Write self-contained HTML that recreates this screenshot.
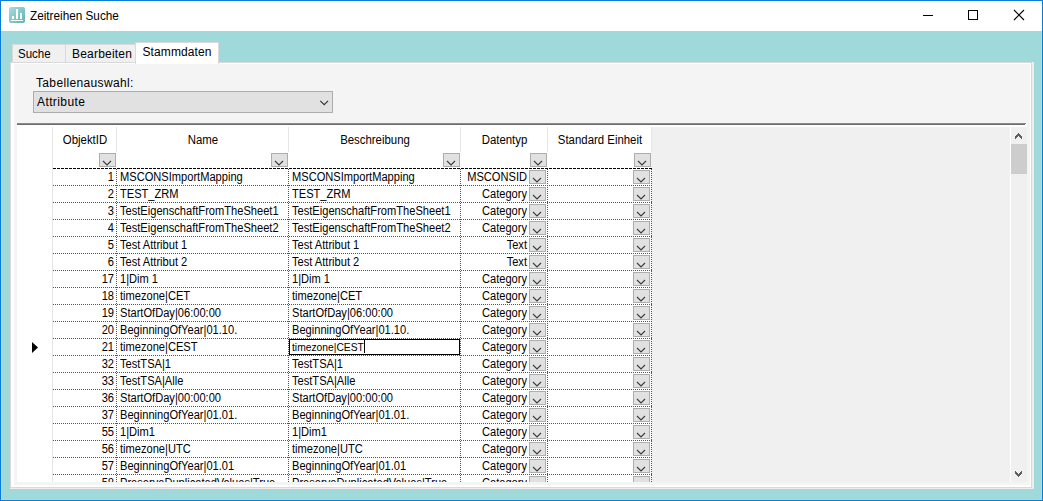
<!DOCTYPE html>
<html><head><meta charset="utf-8">
<style>
*{box-sizing:border-box;margin:0;padding:0}
html,body{width:1043px;height:501px;overflow:hidden;background:#9fd9d9;font-family:"Liberation Sans",sans-serif;color:#000}
.a{position:absolute}
.t{position:absolute;white-space:nowrap;line-height:16px;font-size:11px}
.ch{position:absolute;overflow:visible}
.btn{position:absolute;width:17px;height:14px;background:#e1e1e1;border:1px solid #adadad}
.hl{position:absolute;width:1px;background:#e5e5e5}
.dh{position:absolute;height:1px;background:repeating-linear-gradient(90deg,#555 0 1px,transparent 1px 2px)}
.dv{position:absolute;width:1px;background:repeating-linear-gradient(180deg,#555 0 1px,transparent 1px 2px)}
</style></head><body>

<div class="a" style="left:0;top:0;width:1043px;height:501px;border:1px solid #0a7dd8;border-right-color:#0a7dd8"></div>
<div class="a" style="left:1px;top:1px;width:1041px;height:30px;background:#fff"></div>
<div class="a" style="left:1px;top:31px;width:1041px;height:469px;border:1px solid #a6ded8;border-top:none"></div>
<svg class="a" style="left:9px;top:7px" width="16" height="16" viewBox="0 0 16 16">
<defs><linearGradient id="g" x1="0" y1="0" x2="1" y2="1"><stop offset="0" stop-color="#a9dcdc"/><stop offset="1" stop-color="#5fb4b4"/></linearGradient></defs>
<rect x="0" y="0" width="16" height="16" rx="2" fill="url(#g)"/>
<rect x="3" y="9" width="2" height="3" fill="#fff"/>
<rect x="7" y="2" width="2" height="10" fill="#fff"/>
<rect x="11" y="6" width="2" height="6" fill="#fff"/>
<rect x="2" y="13" width="12" height="1" fill="#fff"/>
</svg>
<div class="t" style="left:30px;top:9.62px;font-size:12.5px;line-height:12.5px;transform:scaleX(0.94);transform-origin:left 0;">Zeitreihen Suche</div>
<div class="a" style="left:923px;top:15px;width:10px;height:1px;background:#000"></div>
<div class="a" style="left:968px;top:10px;width:10px;height:10px;border:1px solid #000"></div>
<svg class="a" style="left:1013px;top:9px" width="12" height="12"><path d="M1 1 L11 11 M11 1 L1 11" stroke="#000" stroke-width="1.1"/></svg>
<div class="a" style="left:12px;top:44px;width:54px;height:19px;background:#f0f0f0;border:1px solid #d9d9d9;border-bottom:none"></div>
<div class="a" style="left:65px;top:44px;width:71px;height:19px;background:#f0f0f0;border:1px solid #d9d9d9;border-bottom:none"></div>
<div class="a" style="left:10px;top:62px;width:1024px;height:427px;background:#f1eded"></div>
<div class="a" style="left:10px;top:62px;width:1022px;height:426px;background:#fff;border:1px solid #d9d9d9;border-left-color:#ddd6d6"></div>
<div class="a" style="left:14px;top:64px;width:1016px;height:421px;background:#f4f4f4"></div>
<div class="a" style="left:135px;top:42px;width:84px;height:22px;background:#fff;border:1px solid #d9d9d9;border-bottom:none"></div>
<div class="t" style="left:17.5px;top:48.03px;font-size:12px;line-height:12px;transform:scaleX(0.96);transform-origin:left 0;">Suche</div>
<div class="t" style="left:72px;top:48.03px;font-size:12px;line-height:12px;letter-spacing:0.2px;">Bearbeiten</div>
<div class="t" style="left:142.5px;top:46.03px;font-size:12px;line-height:12px;letter-spacing:0.1px;">Stammdaten</div>
<div class="t" style="left:36px;top:77.03px;font-size:12px;line-height:12px;letter-spacing:0.35px;">Tabellenauswahl:</div>
<div class="a" style="left:33px;top:91px;width:300px;height:22px;background:#e1e1e1;border:1px solid #adadad"></div>
<div class="t" style="left:37px;top:96.03px;font-size:12px;line-height:12px;letter-spacing:0.4px;">Attribute</div>
<svg class="a" style="left:319px;top:99px" width="12" height="8"><path d="M1.3 1.8 L5.2 5.7 L9.1 1.8" fill="none" stroke="#333" stroke-width="1.15"/></svg>
<div class="a" style="left:17px;top:123px;width:1010px;height:359px;background:#f0f0f0;overflow:hidden">
<div class="a" style="left:0;top:0;width:1010px;height:4px;background:#fff"></div>
<div class="a" style="left:0;top:0;width:1009px;height:1px;background:#8a8a8a"></div>
<div class="a" style="left:0;top:1px;width:1008px;height:1px;background:#6d6d6d"></div>
<div class="a" style="left:0;top:2px;width:1009px;height:2px;background:#fff"></div>
<div class="a" style="left:0;top:4px;width:634px;height:355px;background:#fff"></div>
<div class="hl" style="left:35px;top:4px;height:25px"></div>
<div class="hl" style="left:99px;top:4px;height:25px"></div>
<div class="hl" style="left:271px;top:4px;height:25px"></div>
<div class="hl" style="left:443px;top:4px;height:25px"></div>
<div class="hl" style="left:530px;top:4px;height:25px"></div>
<div class="hl" style="left:634px;top:4px;height:25px"></div>
<div class="hl" style="left:35px;top:4px;height:355px"></div>
<div class="t" style="left:36px;top:11.03px;font-size:12px;line-height:12px;width:64px;text-align:center;transform:scaleX(0.95);transform-origin:center 0;">ObjektID</div>
<div class="btn" style="left:82px;top:30px"></div>
<svg class="ch" style="left:84px;top:35.5px" width="12" height="8"><path d="M2 2 L6.0 6 L10 2" fill="none" stroke="#3a3a3a" stroke-width="1.1"/></svg>
<div class="t" style="left:100px;top:11.03px;font-size:12px;line-height:12px;width:172px;text-align:center;transform:scaleX(0.95);transform-origin:center 0;">Name</div>
<div class="btn" style="left:254px;top:30px"></div>
<svg class="ch" style="left:256px;top:35.5px" width="12" height="8"><path d="M2 2 L6.0 6 L10 2" fill="none" stroke="#3a3a3a" stroke-width="1.1"/></svg>
<div class="t" style="left:272px;top:11.03px;font-size:12px;line-height:12px;width:172px;text-align:center;transform:scaleX(0.95);transform-origin:center 0;">Beschreibung</div>
<div class="btn" style="left:426px;top:30px"></div>
<svg class="ch" style="left:428px;top:35.5px" width="12" height="8"><path d="M2 2 L6.0 6 L10 2" fill="none" stroke="#3a3a3a" stroke-width="1.1"/></svg>
<div class="t" style="left:444px;top:11.03px;font-size:12px;line-height:12px;width:87px;text-align:center;transform:scaleX(0.95);transform-origin:center 0;">Datentyp</div>
<div class="btn" style="left:513px;top:30px"></div>
<svg class="ch" style="left:515px;top:35.5px" width="12" height="8"><path d="M2 2 L6.0 6 L10 2" fill="none" stroke="#3a3a3a" stroke-width="1.1"/></svg>
<div class="t" style="left:531px;top:11.03px;font-size:12px;line-height:12px;width:104px;text-align:center;transform:scaleX(0.95);transform-origin:center 0;">Standard Einheit</div>
<div class="btn" style="left:617px;top:30px"></div>
<svg class="ch" style="left:619px;top:35.5px" width="12" height="8"><path d="M2 2 L6.0 6 L10 2" fill="none" stroke="#3a3a3a" stroke-width="1.1"/></svg>
<div class="a" style="left:36px;top:45px;width:599px;height:1px;background:repeating-linear-gradient(90deg,#000 0 3px,transparent 3px 4px)"></div>
<div class="dh" style="left:36px;top:62px;width:599px"></div>
<div class="t" style="left:35px;top:48.03px;font-size:12px;line-height:12px;width:62px;text-align:right;transform:scaleX(0.925);transform-origin:right 0;">1</div>
<div class="t" style="left:103px;top:48.03px;font-size:12px;line-height:12px;transform:scaleX(0.925);transform-origin:left 0;">MSCONSImportMapping</div>
<div class="t" style="left:275px;top:48.03px;font-size:12px;line-height:12px;transform:scaleX(0.925);transform-origin:left 0;">MSCONSImportMapping</div>
<div class="t" style="left:443px;top:48.03px;font-size:12px;line-height:12px;width:67px;text-align:right;transform:scaleX(0.925);transform-origin:right 0;">MSCONSID</div>
<div class="btn" style="left:512px;top:47px"></div>
<svg class="ch" style="left:514px;top:52.5px" width="12" height="8"><path d="M2 2 L6.0 6 L10 2" fill="none" stroke="#3a3a3a" stroke-width="1.1"/></svg>
<div class="btn" style="left:616px;top:47px"></div>
<svg class="ch" style="left:618px;top:52.5px" width="12" height="8"><path d="M2 2 L6.0 6 L10 2" fill="none" stroke="#3a3a3a" stroke-width="1.1"/></svg>
<div class="dh" style="left:36px;top:79px;width:599px"></div>
<div class="t" style="left:35px;top:65.03px;font-size:12px;line-height:12px;width:62px;text-align:right;transform:scaleX(0.925);transform-origin:right 0;">2</div>
<div class="t" style="left:103px;top:65.03px;font-size:12px;line-height:12px;transform:scaleX(0.925);transform-origin:left 0;">TEST_ZRM</div>
<div class="t" style="left:275px;top:65.03px;font-size:12px;line-height:12px;transform:scaleX(0.925);transform-origin:left 0;">TEST_ZRM</div>
<div class="t" style="left:443px;top:65.03px;font-size:12px;line-height:12px;width:67px;text-align:right;transform:scaleX(0.925);transform-origin:right 0;">Category</div>
<div class="btn" style="left:512px;top:64px"></div>
<svg class="ch" style="left:514px;top:69.5px" width="12" height="8"><path d="M2 2 L6.0 6 L10 2" fill="none" stroke="#3a3a3a" stroke-width="1.1"/></svg>
<div class="btn" style="left:616px;top:64px"></div>
<svg class="ch" style="left:618px;top:69.5px" width="12" height="8"><path d="M2 2 L6.0 6 L10 2" fill="none" stroke="#3a3a3a" stroke-width="1.1"/></svg>
<div class="dh" style="left:36px;top:96px;width:599px"></div>
<div class="t" style="left:35px;top:82.03px;font-size:12px;line-height:12px;width:62px;text-align:right;transform:scaleX(0.925);transform-origin:right 0;">3</div>
<div class="t" style="left:103px;top:82.03px;font-size:12px;line-height:12px;transform:scaleX(0.925);transform-origin:left 0;">TestEigenschaftFromTheSheet1</div>
<div class="t" style="left:275px;top:82.03px;font-size:12px;line-height:12px;transform:scaleX(0.925);transform-origin:left 0;">TestEigenschaftFromTheSheet1</div>
<div class="t" style="left:443px;top:82.03px;font-size:12px;line-height:12px;width:67px;text-align:right;transform:scaleX(0.925);transform-origin:right 0;">Category</div>
<div class="btn" style="left:512px;top:81px"></div>
<svg class="ch" style="left:514px;top:86.5px" width="12" height="8"><path d="M2 2 L6.0 6 L10 2" fill="none" stroke="#3a3a3a" stroke-width="1.1"/></svg>
<div class="btn" style="left:616px;top:81px"></div>
<svg class="ch" style="left:618px;top:86.5px" width="12" height="8"><path d="M2 2 L6.0 6 L10 2" fill="none" stroke="#3a3a3a" stroke-width="1.1"/></svg>
<div class="dh" style="left:36px;top:113px;width:599px"></div>
<div class="t" style="left:35px;top:99.03px;font-size:12px;line-height:12px;width:62px;text-align:right;transform:scaleX(0.925);transform-origin:right 0;">4</div>
<div class="t" style="left:103px;top:99.03px;font-size:12px;line-height:12px;transform:scaleX(0.925);transform-origin:left 0;">TestEigenschaftFromTheSheet2</div>
<div class="t" style="left:275px;top:99.03px;font-size:12px;line-height:12px;transform:scaleX(0.925);transform-origin:left 0;">TestEigenschaftFromTheSheet2</div>
<div class="t" style="left:443px;top:99.03px;font-size:12px;line-height:12px;width:67px;text-align:right;transform:scaleX(0.925);transform-origin:right 0;">Category</div>
<div class="btn" style="left:512px;top:98px"></div>
<svg class="ch" style="left:514px;top:103.5px" width="12" height="8"><path d="M2 2 L6.0 6 L10 2" fill="none" stroke="#3a3a3a" stroke-width="1.1"/></svg>
<div class="btn" style="left:616px;top:98px"></div>
<svg class="ch" style="left:618px;top:103.5px" width="12" height="8"><path d="M2 2 L6.0 6 L10 2" fill="none" stroke="#3a3a3a" stroke-width="1.1"/></svg>
<div class="dh" style="left:36px;top:130px;width:599px"></div>
<div class="t" style="left:35px;top:116.03px;font-size:12px;line-height:12px;width:62px;text-align:right;transform:scaleX(0.925);transform-origin:right 0;">5</div>
<div class="t" style="left:103px;top:116.03px;font-size:12px;line-height:12px;transform:scaleX(0.925);transform-origin:left 0;">Test Attribut 1</div>
<div class="t" style="left:275px;top:116.03px;font-size:12px;line-height:12px;transform:scaleX(0.925);transform-origin:left 0;">Test Attribut 1</div>
<div class="t" style="left:443px;top:116.03px;font-size:12px;line-height:12px;width:67px;text-align:right;transform:scaleX(0.925);transform-origin:right 0;">Text</div>
<div class="btn" style="left:512px;top:115px"></div>
<svg class="ch" style="left:514px;top:120.5px" width="12" height="8"><path d="M2 2 L6.0 6 L10 2" fill="none" stroke="#3a3a3a" stroke-width="1.1"/></svg>
<div class="btn" style="left:616px;top:115px"></div>
<svg class="ch" style="left:618px;top:120.5px" width="12" height="8"><path d="M2 2 L6.0 6 L10 2" fill="none" stroke="#3a3a3a" stroke-width="1.1"/></svg>
<div class="dh" style="left:36px;top:147px;width:599px"></div>
<div class="t" style="left:35px;top:133.03px;font-size:12px;line-height:12px;width:62px;text-align:right;transform:scaleX(0.925);transform-origin:right 0;">6</div>
<div class="t" style="left:103px;top:133.03px;font-size:12px;line-height:12px;transform:scaleX(0.925);transform-origin:left 0;">Test Attribut 2</div>
<div class="t" style="left:275px;top:133.03px;font-size:12px;line-height:12px;transform:scaleX(0.925);transform-origin:left 0;">Test Attribut 2</div>
<div class="t" style="left:443px;top:133.03px;font-size:12px;line-height:12px;width:67px;text-align:right;transform:scaleX(0.925);transform-origin:right 0;">Text</div>
<div class="btn" style="left:512px;top:132px"></div>
<svg class="ch" style="left:514px;top:137.5px" width="12" height="8"><path d="M2 2 L6.0 6 L10 2" fill="none" stroke="#3a3a3a" stroke-width="1.1"/></svg>
<div class="btn" style="left:616px;top:132px"></div>
<svg class="ch" style="left:618px;top:137.5px" width="12" height="8"><path d="M2 2 L6.0 6 L10 2" fill="none" stroke="#3a3a3a" stroke-width="1.1"/></svg>
<div class="dh" style="left:36px;top:164px;width:599px"></div>
<div class="t" style="left:35px;top:150.03px;font-size:12px;line-height:12px;width:62px;text-align:right;transform:scaleX(0.925);transform-origin:right 0;">17</div>
<div class="t" style="left:103px;top:150.03px;font-size:12px;line-height:12px;transform:scaleX(0.925);transform-origin:left 0;">1|Dim 1</div>
<div class="t" style="left:275px;top:150.03px;font-size:12px;line-height:12px;transform:scaleX(0.925);transform-origin:left 0;">1|Dim 1</div>
<div class="t" style="left:443px;top:150.03px;font-size:12px;line-height:12px;width:67px;text-align:right;transform:scaleX(0.925);transform-origin:right 0;">Category</div>
<div class="btn" style="left:512px;top:149px"></div>
<svg class="ch" style="left:514px;top:154.5px" width="12" height="8"><path d="M2 2 L6.0 6 L10 2" fill="none" stroke="#3a3a3a" stroke-width="1.1"/></svg>
<div class="btn" style="left:616px;top:149px"></div>
<svg class="ch" style="left:618px;top:154.5px" width="12" height="8"><path d="M2 2 L6.0 6 L10 2" fill="none" stroke="#3a3a3a" stroke-width="1.1"/></svg>
<div class="dh" style="left:36px;top:181px;width:599px"></div>
<div class="t" style="left:35px;top:167.03px;font-size:12px;line-height:12px;width:62px;text-align:right;transform:scaleX(0.925);transform-origin:right 0;">18</div>
<div class="t" style="left:103px;top:167.03px;font-size:12px;line-height:12px;transform:scaleX(0.925);transform-origin:left 0;">timezone|CET</div>
<div class="t" style="left:275px;top:167.03px;font-size:12px;line-height:12px;transform:scaleX(0.925);transform-origin:left 0;">timezone|CET</div>
<div class="t" style="left:443px;top:167.03px;font-size:12px;line-height:12px;width:67px;text-align:right;transform:scaleX(0.925);transform-origin:right 0;">Category</div>
<div class="btn" style="left:512px;top:166px"></div>
<svg class="ch" style="left:514px;top:171.5px" width="12" height="8"><path d="M2 2 L6.0 6 L10 2" fill="none" stroke="#3a3a3a" stroke-width="1.1"/></svg>
<div class="btn" style="left:616px;top:166px"></div>
<svg class="ch" style="left:618px;top:171.5px" width="12" height="8"><path d="M2 2 L6.0 6 L10 2" fill="none" stroke="#3a3a3a" stroke-width="1.1"/></svg>
<div class="dh" style="left:36px;top:198px;width:599px"></div>
<div class="t" style="left:35px;top:184.03px;font-size:12px;line-height:12px;width:62px;text-align:right;transform:scaleX(0.925);transform-origin:right 0;">19</div>
<div class="t" style="left:103px;top:184.03px;font-size:12px;line-height:12px;transform:scaleX(0.925);transform-origin:left 0;">StartOfDay|06:00:00</div>
<div class="t" style="left:275px;top:184.03px;font-size:12px;line-height:12px;transform:scaleX(0.925);transform-origin:left 0;">StartOfDay|06:00:00</div>
<div class="t" style="left:443px;top:184.03px;font-size:12px;line-height:12px;width:67px;text-align:right;transform:scaleX(0.925);transform-origin:right 0;">Category</div>
<div class="btn" style="left:512px;top:183px"></div>
<svg class="ch" style="left:514px;top:188.5px" width="12" height="8"><path d="M2 2 L6.0 6 L10 2" fill="none" stroke="#3a3a3a" stroke-width="1.1"/></svg>
<div class="btn" style="left:616px;top:183px"></div>
<svg class="ch" style="left:618px;top:188.5px" width="12" height="8"><path d="M2 2 L6.0 6 L10 2" fill="none" stroke="#3a3a3a" stroke-width="1.1"/></svg>
<div class="dh" style="left:36px;top:215px;width:599px"></div>
<div class="t" style="left:35px;top:201.03px;font-size:12px;line-height:12px;width:62px;text-align:right;transform:scaleX(0.925);transform-origin:right 0;">20</div>
<div class="t" style="left:103px;top:201.03px;font-size:12px;line-height:12px;transform:scaleX(0.925);transform-origin:left 0;">BeginningOfYear|01.10.</div>
<div class="t" style="left:275px;top:201.03px;font-size:12px;line-height:12px;transform:scaleX(0.925);transform-origin:left 0;">BeginningOfYear|01.10.</div>
<div class="t" style="left:443px;top:201.03px;font-size:12px;line-height:12px;width:67px;text-align:right;transform:scaleX(0.925);transform-origin:right 0;">Category</div>
<div class="btn" style="left:512px;top:200px"></div>
<svg class="ch" style="left:514px;top:205.5px" width="12" height="8"><path d="M2 2 L6.0 6 L10 2" fill="none" stroke="#3a3a3a" stroke-width="1.1"/></svg>
<div class="btn" style="left:616px;top:200px"></div>
<svg class="ch" style="left:618px;top:205.5px" width="12" height="8"><path d="M2 2 L6.0 6 L10 2" fill="none" stroke="#3a3a3a" stroke-width="1.1"/></svg>
<div class="dh" style="left:36px;top:232px;width:599px"></div>
<div class="t" style="left:35px;top:218.03px;font-size:12px;line-height:12px;width:62px;text-align:right;transform:scaleX(0.925);transform-origin:right 0;">21</div>
<div class="t" style="left:103px;top:218.03px;font-size:12px;line-height:12px;transform:scaleX(0.925);transform-origin:left 0;">timezone|CEST</div>
<div class="a" style="left:272px;top:216px;width:171px;height:16px;background:#fff;border:1px solid #000"></div>
<div class="t" style="left:275px;top:218.62px;font-size:11.3px;line-height:11.3px;transform:scaleX(0.91);transform-origin:left 0;">timezone|CEST</div>
<div class="a" style="left:347px;top:217px;width:1px;height:13px;background:#000"></div>
<div class="t" style="left:443px;top:218.03px;font-size:12px;line-height:12px;width:67px;text-align:right;transform:scaleX(0.925);transform-origin:right 0;">Category</div>
<div class="btn" style="left:512px;top:217px"></div>
<svg class="ch" style="left:514px;top:222.5px" width="12" height="8"><path d="M2 2 L6.0 6 L10 2" fill="none" stroke="#3a3a3a" stroke-width="1.1"/></svg>
<div class="btn" style="left:616px;top:217px"></div>
<svg class="ch" style="left:618px;top:222.5px" width="12" height="8"><path d="M2 2 L6.0 6 L10 2" fill="none" stroke="#3a3a3a" stroke-width="1.1"/></svg>
<div class="dh" style="left:36px;top:249px;width:599px"></div>
<div class="t" style="left:35px;top:235.03px;font-size:12px;line-height:12px;width:62px;text-align:right;transform:scaleX(0.925);transform-origin:right 0;">32</div>
<div class="t" style="left:103px;top:235.03px;font-size:12px;line-height:12px;transform:scaleX(0.925);transform-origin:left 0;">TestTSA|1</div>
<div class="t" style="left:275px;top:235.03px;font-size:12px;line-height:12px;transform:scaleX(0.925);transform-origin:left 0;">TestTSA|1</div>
<div class="t" style="left:443px;top:235.03px;font-size:12px;line-height:12px;width:67px;text-align:right;transform:scaleX(0.925);transform-origin:right 0;">Category</div>
<div class="btn" style="left:512px;top:234px"></div>
<svg class="ch" style="left:514px;top:239.5px" width="12" height="8"><path d="M2 2 L6.0 6 L10 2" fill="none" stroke="#3a3a3a" stroke-width="1.1"/></svg>
<div class="btn" style="left:616px;top:234px"></div>
<svg class="ch" style="left:618px;top:239.5px" width="12" height="8"><path d="M2 2 L6.0 6 L10 2" fill="none" stroke="#3a3a3a" stroke-width="1.1"/></svg>
<div class="dh" style="left:36px;top:266px;width:599px"></div>
<div class="t" style="left:35px;top:252.03px;font-size:12px;line-height:12px;width:62px;text-align:right;transform:scaleX(0.925);transform-origin:right 0;">33</div>
<div class="t" style="left:103px;top:252.03px;font-size:12px;line-height:12px;transform:scaleX(0.925);transform-origin:left 0;">TestTSA|Alle</div>
<div class="t" style="left:275px;top:252.03px;font-size:12px;line-height:12px;transform:scaleX(0.925);transform-origin:left 0;">TestTSA|Alle</div>
<div class="t" style="left:443px;top:252.03px;font-size:12px;line-height:12px;width:67px;text-align:right;transform:scaleX(0.925);transform-origin:right 0;">Category</div>
<div class="btn" style="left:512px;top:251px"></div>
<svg class="ch" style="left:514px;top:256.5px" width="12" height="8"><path d="M2 2 L6.0 6 L10 2" fill="none" stroke="#3a3a3a" stroke-width="1.1"/></svg>
<div class="btn" style="left:616px;top:251px"></div>
<svg class="ch" style="left:618px;top:256.5px" width="12" height="8"><path d="M2 2 L6.0 6 L10 2" fill="none" stroke="#3a3a3a" stroke-width="1.1"/></svg>
<div class="dh" style="left:36px;top:283px;width:599px"></div>
<div class="t" style="left:35px;top:269.03px;font-size:12px;line-height:12px;width:62px;text-align:right;transform:scaleX(0.925);transform-origin:right 0;">36</div>
<div class="t" style="left:103px;top:269.03px;font-size:12px;line-height:12px;transform:scaleX(0.925);transform-origin:left 0;">StartOfDay|00:00:00</div>
<div class="t" style="left:275px;top:269.03px;font-size:12px;line-height:12px;transform:scaleX(0.925);transform-origin:left 0;">StartOfDay|00:00:00</div>
<div class="t" style="left:443px;top:269.03px;font-size:12px;line-height:12px;width:67px;text-align:right;transform:scaleX(0.925);transform-origin:right 0;">Category</div>
<div class="btn" style="left:512px;top:268px"></div>
<svg class="ch" style="left:514px;top:273.5px" width="12" height="8"><path d="M2 2 L6.0 6 L10 2" fill="none" stroke="#3a3a3a" stroke-width="1.1"/></svg>
<div class="btn" style="left:616px;top:268px"></div>
<svg class="ch" style="left:618px;top:273.5px" width="12" height="8"><path d="M2 2 L6.0 6 L10 2" fill="none" stroke="#3a3a3a" stroke-width="1.1"/></svg>
<div class="dh" style="left:36px;top:300px;width:599px"></div>
<div class="t" style="left:35px;top:286.03px;font-size:12px;line-height:12px;width:62px;text-align:right;transform:scaleX(0.925);transform-origin:right 0;">37</div>
<div class="t" style="left:103px;top:286.03px;font-size:12px;line-height:12px;transform:scaleX(0.925);transform-origin:left 0;">BeginningOfYear|01.01.</div>
<div class="t" style="left:275px;top:286.03px;font-size:12px;line-height:12px;transform:scaleX(0.925);transform-origin:left 0;">BeginningOfYear|01.01.</div>
<div class="t" style="left:443px;top:286.03px;font-size:12px;line-height:12px;width:67px;text-align:right;transform:scaleX(0.925);transform-origin:right 0;">Category</div>
<div class="btn" style="left:512px;top:285px"></div>
<svg class="ch" style="left:514px;top:290.5px" width="12" height="8"><path d="M2 2 L6.0 6 L10 2" fill="none" stroke="#3a3a3a" stroke-width="1.1"/></svg>
<div class="btn" style="left:616px;top:285px"></div>
<svg class="ch" style="left:618px;top:290.5px" width="12" height="8"><path d="M2 2 L6.0 6 L10 2" fill="none" stroke="#3a3a3a" stroke-width="1.1"/></svg>
<div class="dh" style="left:36px;top:317px;width:599px"></div>
<div class="t" style="left:35px;top:303.03px;font-size:12px;line-height:12px;width:62px;text-align:right;transform:scaleX(0.925);transform-origin:right 0;">55</div>
<div class="t" style="left:103px;top:303.03px;font-size:12px;line-height:12px;transform:scaleX(0.925);transform-origin:left 0;">1|Dim1</div>
<div class="t" style="left:275px;top:303.03px;font-size:12px;line-height:12px;transform:scaleX(0.925);transform-origin:left 0;">1|Dim1</div>
<div class="t" style="left:443px;top:303.03px;font-size:12px;line-height:12px;width:67px;text-align:right;transform:scaleX(0.925);transform-origin:right 0;">Category</div>
<div class="btn" style="left:512px;top:302px"></div>
<svg class="ch" style="left:514px;top:307.5px" width="12" height="8"><path d="M2 2 L6.0 6 L10 2" fill="none" stroke="#3a3a3a" stroke-width="1.1"/></svg>
<div class="btn" style="left:616px;top:302px"></div>
<svg class="ch" style="left:618px;top:307.5px" width="12" height="8"><path d="M2 2 L6.0 6 L10 2" fill="none" stroke="#3a3a3a" stroke-width="1.1"/></svg>
<div class="dh" style="left:36px;top:334px;width:599px"></div>
<div class="t" style="left:35px;top:320.03px;font-size:12px;line-height:12px;width:62px;text-align:right;transform:scaleX(0.925);transform-origin:right 0;">56</div>
<div class="t" style="left:103px;top:320.03px;font-size:12px;line-height:12px;transform:scaleX(0.925);transform-origin:left 0;">timezone|UTC</div>
<div class="t" style="left:275px;top:320.03px;font-size:12px;line-height:12px;transform:scaleX(0.925);transform-origin:left 0;">timezone|UTC</div>
<div class="t" style="left:443px;top:320.03px;font-size:12px;line-height:12px;width:67px;text-align:right;transform:scaleX(0.925);transform-origin:right 0;">Category</div>
<div class="btn" style="left:512px;top:319px"></div>
<svg class="ch" style="left:514px;top:324.5px" width="12" height="8"><path d="M2 2 L6.0 6 L10 2" fill="none" stroke="#3a3a3a" stroke-width="1.1"/></svg>
<div class="btn" style="left:616px;top:319px"></div>
<svg class="ch" style="left:618px;top:324.5px" width="12" height="8"><path d="M2 2 L6.0 6 L10 2" fill="none" stroke="#3a3a3a" stroke-width="1.1"/></svg>
<div class="dh" style="left:36px;top:351px;width:599px"></div>
<div class="t" style="left:35px;top:337.03px;font-size:12px;line-height:12px;width:62px;text-align:right;transform:scaleX(0.925);transform-origin:right 0;">57</div>
<div class="t" style="left:103px;top:337.03px;font-size:12px;line-height:12px;transform:scaleX(0.925);transform-origin:left 0;">BeginningOfYear|01.01</div>
<div class="t" style="left:275px;top:337.03px;font-size:12px;line-height:12px;transform:scaleX(0.925);transform-origin:left 0;">BeginningOfYear|01.01</div>
<div class="t" style="left:443px;top:337.03px;font-size:12px;line-height:12px;width:67px;text-align:right;transform:scaleX(0.925);transform-origin:right 0;">Category</div>
<div class="btn" style="left:512px;top:336px"></div>
<svg class="ch" style="left:514px;top:341.5px" width="12" height="8"><path d="M2 2 L6.0 6 L10 2" fill="none" stroke="#3a3a3a" stroke-width="1.1"/></svg>
<div class="btn" style="left:616px;top:336px"></div>
<svg class="ch" style="left:618px;top:341.5px" width="12" height="8"><path d="M2 2 L6.0 6 L10 2" fill="none" stroke="#3a3a3a" stroke-width="1.1"/></svg>
<div class="dh" style="left:36px;top:368px;width:599px"></div>
<div class="t" style="left:35px;top:354.03px;font-size:12px;line-height:12px;width:62px;text-align:right;transform:scaleX(0.925);transform-origin:right 0;">58</div>
<div class="t" style="left:103px;top:354.03px;font-size:12px;line-height:12px;transform:scaleX(0.925);transform-origin:left 0;">PreserveDuplicatedValues|True</div>
<div class="t" style="left:275px;top:354.03px;font-size:12px;line-height:12px;transform:scaleX(0.925);transform-origin:left 0;">PreserveDuplicatedValues|True</div>
<div class="t" style="left:443px;top:354.03px;font-size:12px;line-height:12px;width:67px;text-align:right;transform:scaleX(0.925);transform-origin:right 0;">Category</div>
<div class="btn" style="left:512px;top:353px"></div>
<svg class="ch" style="left:514px;top:358.5px" width="12" height="8"><path d="M2 2 L6.0 6 L10 2" fill="none" stroke="#3a3a3a" stroke-width="1.1"/></svg>
<div class="btn" style="left:616px;top:353px"></div>
<svg class="ch" style="left:618px;top:358.5px" width="12" height="8"><path d="M2 2 L6.0 6 L10 2" fill="none" stroke="#3a3a3a" stroke-width="1.1"/></svg>
<div class="dv" style="left:99px;top:46px;height:313px"></div>
<div class="dv" style="left:271px;top:46px;height:313px"></div>
<div class="dv" style="left:443px;top:46px;height:313px"></div>
<div class="dv" style="left:530px;top:46px;height:313px"></div>
<div class="dv" style="left:634px;top:46px;height:313px"></div>
<svg class="a" style="left:15px;top:219px" width="7" height="12"><path d="M0 0 L6 5.5 L0 11 Z" fill="#000"/></svg>
<div class="a" style="left:993px;top:4px;width:1px;height:355px;background:#fff"></div>
<div class="a" style="left:994px;top:4px;width:16px;height:355px;background:#f0f0f0"></div>
<div class="a" style="left:994px;top:21px;width:16px;height:30px;background:#cdcdcd"></div>
<svg class="a" style="left:0;top:0" width="1010" height="359" shape-rendering="crispEdges"><g fill="#606060"><rect x="998" y="348" width="1" height="3"/><rect x="998" y="13" width="1" height="3"/><rect x="999" y="349" width="1" height="3"/><rect x="999" y="12" width="1" height="3"/><rect x="1000" y="350" width="1" height="3"/><rect x="1000" y="11" width="1" height="3"/><rect x="1001" y="351" width="1" height="3"/><rect x="1001" y="10" width="1" height="3"/><rect x="1002" y="350" width="1" height="3"/><rect x="1002" y="11" width="1" height="3"/><rect x="1003" y="349" width="1" height="3"/><rect x="1003" y="12" width="1" height="3"/><rect x="1004" y="348" width="1" height="3"/><rect x="1004" y="13" width="1" height="3"/></g></svg>
</div>
</body></html>
